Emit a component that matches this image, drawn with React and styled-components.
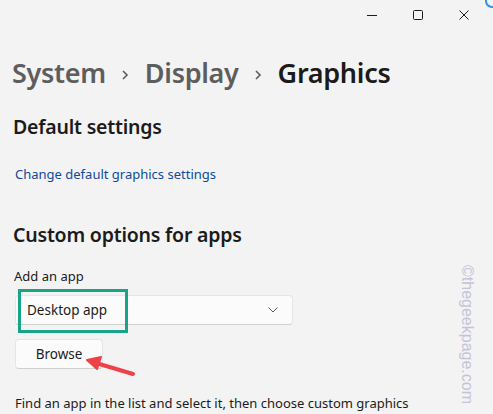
import React from "react";
import styled, { createGlobalStyle } from "styled-components";

const GlobalStyle = createGlobalStyle`
  html, body {
    margin: 0;
    padding: 0;
    background: #f3f3f3;
    overflow: hidden;
  }
  body {
    font-family: "Noto Sans", "Open Sans", sans-serif;
    color: #1b1b1b;
  }
`;

const Window = styled.div`
  position: relative;
  width: 493px;
  height: 414px;
  background: #f3f3f3;
  overflow: hidden;
`;

const TitleBar = styled.div`
  display: flex;
  justify-content: flex-end;
  height: 30px;
  padding-right: 6px;
`;

const WinButton = styled.div`
  width: 46px;
  height: 30px;
  display: flex;
  align-items: center;
  justify-content: center;
  color: #1b1b1b;
`;

const Breadcrumb = styled.div`
  display: flex;
  align-items: baseline;
  padding: 25px 0 0 12px;
  font-size: 27px;
  font-weight: 600;
  line-height: 36px;
  letter-spacing: -0.3px;
`;

const Crumb = styled.span`
  color: ${p => (p.current ? "#1b1b1b" : "#5d5d5d")};
`;

const Chevron = styled.span`
  display: inline-flex;
  width: 39px;
  justify-content: center;
  color: #5d5d5d;
  align-self: center;
  padding-top: 4px;
`;

const Content = styled.div`
  padding: 0 13px;
`;

const SectionTitle = styled.h2`
  margin: ${p => p.top} 0 0;
  font-size: 19.5px;
  font-weight: 600;
  line-height: 26px;
  letter-spacing: -0.2px;
  color: #1b1b1b;
`;

const Link = styled.a`
  display: block;
  margin: 24px 0 0 2px;
  font-size: 13px;
  line-height: 20px;
  color: #0f4b9c;
  text-decoration: none;
`;

const Label = styled.div`
  margin: 18px 0 0 1px;
  font-size: 13px;
  line-height: 20px;
  color: #1b1b1b;
`;

const Picker = styled.div`
  position: relative;
  margin: 9px 0 0 2px;
  width: 278px;
  height: 30px;
  box-sizing: border-box;
  display: flex;
  align-items: center;
  justify-content: space-between;
  padding: 0 14px 0 11px;
  background: #fbfbfb;
  border: 1px solid #e5e5e5;
  border-bottom-color: #d0d0d0;
  border-radius: 4px;
  font-size: 13.5px;
  color: #1b1b1b;
`;

const Highlight = styled.div`
  position: absolute;
  left: 2px;
  top: -7px;
  width: 110px;
  height: 44px;
  box-sizing: border-box;
  border: 3px solid #17a589;
`;

const Button = styled.div`
  margin: 14px 0 0 2px;
  width: 88px;
  height: 30px;
  box-sizing: border-box;
  display: flex;
  align-items: center;
  justify-content: center;
  background: #fbfbfb;
  border: 1px solid #e5e5e5;
  border-bottom-color: #d0d0d0;
  border-radius: 4px;
  font-size: 13.5px;
  color: #1b1b1b;
`;

const Description = styled.p`
  margin: 24px 0 0 2px;
  font-size: 13px;
  line-height: 20px;
  color: #1b1b1b;
  white-space: nowrap;
`;

const Arrow = styled.svg`
  position: absolute;
  left: 84px;
  top: 354px;
`;

const Watermark = styled.div`
  position: absolute;
  left: 476px;
  top: 265px;
  transform-origin: 0 0;
  transform: rotate(90deg);
  font-family: "Liberation Sans", Arial, sans-serif;
  font-size: 16px;
  color: #c5c3d8;
  white-space: nowrap;
`;

const Corner = styled.div`
  position: absolute;
  right: -6px;
  top: -6px;
  width: 10px;
  height: 10px;
  border-radius: 50%;
  border: 2px solid #3a8ee6;
`;

const ChevronIcon = () => (
  <svg width="8" height="12" viewBox="0 0 8 12">
    <path d="M2 2l4 4-4 4" fill="none" stroke="#5d5d5d" strokeWidth="1.6" />
  </svg>
);

export default function App() {
  return (
    <Window>
      <GlobalStyle />
      <Corner />
      <TitleBar>
        <WinButton>
          <svg width="10" height="10" viewBox="0 0 10 10">
            <path d="M0 5.5h10" stroke="#1b1b1b" strokeWidth="1" />
          </svg>
        </WinButton>
        <WinButton>
          <svg width="10" height="10" viewBox="0 0 10 10">
            <rect x="0.5" y="0.5" width="9" height="9" rx="1" fill="none" stroke="#1b1b1b" strokeWidth="1" />
          </svg>
        </WinButton>
        <WinButton>
          <svg width="10" height="10" viewBox="0 0 10 10">
            <path d="M0.5 0.5l9 9M9.5 0.5l-9 9" stroke="#1b1b1b" strokeWidth="1" />
          </svg>
        </WinButton>
      </TitleBar>

      <Breadcrumb>
        <Crumb>System</Crumb>
        <Chevron>
          <ChevronIcon />
        </Chevron>
        <Crumb>Display</Crumb>
        <Chevron>
          <ChevronIcon />
        </Chevron>
        <Crumb current>Graphics</Crumb>
      </Breadcrumb>

      <Content>
        <SectionTitle top="23px">Default settings</SectionTitle>
        <Link href="#">Change default graphics settings</Link>

        <SectionTitle top="38px">Custom options for apps</SectionTitle>
        <Label>Add an app</Label>
        <Picker>
          <span>Desktop app</span>
          <svg width="10" height="6" viewBox="0 0 10 6">
            <path d="M0.5 0.5l4.5 4.5 4.5-4.5" fill="none" stroke="#5d5d5d" strokeWidth="1" />
          </svg>
          <Highlight />
        </Picker>
        <Button>Browse</Button>
        <Description>
          Find an app in the list and select it, then choose custom graphics
        </Description>
      </Content>

      <Arrow width="54" height="28" viewBox="0 0 54 28">
        <path d="M49 20L12 9" stroke="#ee4248" strokeWidth="4" strokeLinecap="round" />
        <path d="M3 6L17 3L13 15Z" fill="#ee4248" stroke="#ee4248" strokeWidth="2" strokeLinejoin="round" />
      </Arrow>

      <Watermark>©thegeekpage.com</Watermark>
    </Window>
  );
}
